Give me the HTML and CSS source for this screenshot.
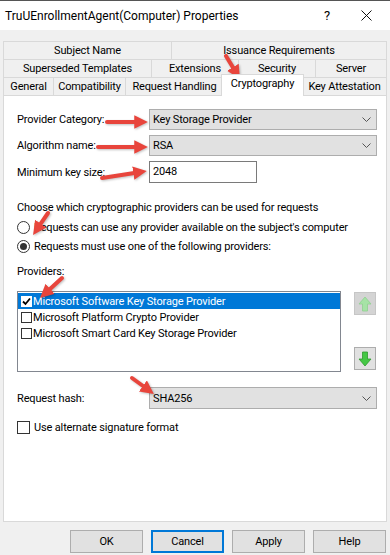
FILE: index.html
```html
<!DOCTYPE html>
<html lang="en">
<head>
    <meta charset="UTF-8">
    <meta name="viewport" content="width=device-width, initial-scale=1.0">
    <title>TruUEnrollmentAgent(Computer) Properties</title>
    <link rel="stylesheet" href="styles.css">
</head>
<body>
    <div class="dialog">
        <div class="titlebar">
            <span class="title">TruUEnrollmentAgent(Computer) Properties</span>
            <span class="title-help">?</span>
            <span class="title-close">
                <svg width="11" height="11" viewBox="0 0 11 11"><path d="M0.5 0.5 L10.5 10.5 M10.5 0.5 L0.5 10.5" stroke="#111" stroke-width="1"/></svg>
            </span>
        </div>

        <div class="sheet">
            <div class="tabs">
                <div class="tab-row row-top">
                    <div class="tab">Subject Name</div>
                    <div class="tab">Issuance Requirements</div>
                </div>
                <div class="tab-row row-mid">
                    <div class="tab">Superseded Templates</div>
                    <div class="tab">Extensions</div>
                    <div class="tab">Security</div>
                    <div class="tab">Server</div>
                </div>
                <div class="tab-row row-bottom">
                    <div class="tab">General</div>
                    <div class="tab">Compatibility</div>
                    <div class="tab">Request Handling</div>
                    <div class="tab active">Cryptography</div>
                    <div class="tab">Key Attestation</div>
                </div>
            </div>

            <div class="panel">
                <div class="fields">
                    <div class="field-row">
                        <span class="label">Provider Category:</span>
                        <div class="combo"><span>Key Storage Provider</span><svg width="9" height="5" viewBox="0 0 9 5"><path d="M0.5 0.5 L4.5 4.5 L8.5 0.5" fill="none" stroke="#555"/></svg></div>
                    </div>
                    <div class="field-row">
                        <span class="label">Algorithm name:</span>
                        <div class="combo"><span>RSA</span><svg width="9" height="5" viewBox="0 0 9 5"><path d="M0.5 0.5 L4.5 4.5 L8.5 0.5" fill="none" stroke="#555"/></svg></div>
                    </div>
                    <div class="field-row">
                        <span class="label">Minimum key size:</span>
                        <div class="textbox">2048</div>
                    </div>
                </div>

                <p class="group-text">Choose which cryptographic providers can be used for requests</p>
                <div class="option">
                    <span class="radio"></span>
                    <span>Requests can use any provider available on the subject's computer</span>
                </div>
                <div class="option">
                    <span class="radio checked"><span class="radio-dot"></span></span>
                    <span>Requests must use one of the following providers:</span>
                </div>

                <p class="group-text providers-label">Providers:</p>
                <div class="providers">
                    <div class="listbox">
                        <div class="list-item selected">
                            <span class="check on">
                                <svg width="9" height="9" viewBox="0 0 9 9"><path d="M1 4.5 L3.5 7 L8 1.5" fill="none" stroke="#000" stroke-width="1.8"/></svg>
                            </span>
                            <span>Microsoft Software Key Storage Provider</span>
                        </div>
                        <div class="list-item">
                            <span class="check"></span>
                            <span>Microsoft Platform Crypto Provider</span>
                        </div>
                        <div class="list-item">
                            <span class="check"></span>
                            <span>Microsoft Smart Card Key Storage Provider</span>
                        </div>
                    </div>
                    <div class="move-buttons">
                        <div class="move-btn disabled">
                            <svg width="14" height="16" viewBox="0 0 14 16"><path d="M7 1 L13 8 L9.5 8 L9.5 15 L4.5 15 L4.5 8 L1 8 Z" fill="#a6e3a6" stroke="#8fd08f" stroke-width="0.8"/></svg>
                        </div>
                        <div class="move-btn">
                            <svg width="14" height="16" viewBox="0 0 14 16"><path d="M4.5 1 L9.5 1 L9.5 8 L13 8 L7 15 L1 8 L4.5 8 Z" fill="#45c745" stroke="#2e9a2e" stroke-width="0.8"/></svg>
                        </div>
                    </div>
                </div>

                <div class="field-row hash-row">
                    <span class="label">Request hash:</span>
                    <div class="combo"><span>SHA256</span><svg width="9" height="5" viewBox="0 0 9 5"><path d="M0.5 0.5 L4.5 4.5 L8.5 0.5" fill="none" stroke="#555"/></svg></div>
                </div>

                <div class="option alt-format">
                    <span class="check plain"></span>
                    <span>Use alternate signature format</span>
                </div>
            </div>
        </div>

        <div class="buttons">
            <button class="btn">OK</button>
            <button class="btn focused">Cancel</button>
            <button class="btn">Apply</button>
            <button class="btn">Help</button>
        </div>

        <!-- red callout arrows drawn on top of the screenshot -->
        <svg class="marks" width="390" height="555" viewBox="0 0 390 555">
            <defs>
                <marker id="head" viewBox="0 0 10 10" refX="2" refY="5" markerWidth="3.4" markerHeight="3.4" orient="auto">
                    <path d="M0 0 L10 5 L0 10 Z" fill="#e8453c"/>
                </marker>
            </defs>
            <line x1="107" y1="121" x2="137" y2="121" marker-end="url(#head)"/>
            <line x1="98" y1="146" x2="137" y2="146" marker-end="url(#head)"/>
            <line x1="102" y1="177" x2="136" y2="171.7" marker-end="url(#head)"/>
            <line x1="226" y1="55" x2="234.3" y2="68.6" marker-end="url(#head)"/>
            <line x1="48" y1="212" x2="39.2" y2="224.9" marker-end="url(#head)"/>
            <line x1="62" y1="277" x2="48.1" y2="289.7" marker-end="url(#head)"/>
            <line x1="132" y1="377" x2="145.1" y2="386.5" marker-end="url(#head)"/>
        </svg>
    </div>
</body>
</html>
```

FILE: styles.css
```css
* {
    margin: 0;
    padding: 0;
    box-sizing: border-box;
}

body {
    font-family: Roboto, 'Liberation Sans', sans-serif;
    font-size: 11px;
    letter-spacing: -0.15px;
    color: #000;
    background: #f0f0f0;
}

.dialog {
    position: relative;
    width: 390px;
    height: 555px;
    background: #f0f0f0;
    border-top: 1px solid #555;
    overflow: hidden;
}

.titlebar {
    display: flex;
    align-items: center;
    height: 29px;
    background: #fff;
    padding-left: 5px;
}

.title {
    flex: 1;
    font-size: 12px;
    letter-spacing: 0;
}

.title-help {
    font-size: 13px;
    margin-right: 31px;
}

.title-close {
    display: flex;
    margin-right: 18px;
}

.sheet {
    padding: 11px 3px 0 3px;
}

.tab-row {
    display: grid;
    height: 18px;
}

.row-top { grid-template-columns: 168px 216px; }
.row-mid { grid-template-columns: 148px 87px 77px 72px; }
.row-bottom { grid-template-columns: 50px 72px 98px 79px 85px; }

.tab {
    border-top: 1px solid #d9d9d9;
    border-left: 1px solid #d9d9d9;
    background: #f0f0f0;
    text-align: center;
    line-height: 17px;
    white-space: nowrap;
}

.tab:last-child {
    border-right: 1px solid #d9d9d9;
}

.tab.active {
    position: relative;
    z-index: 1;
    margin: -3px -2px -1px;
    background: #fff;
    border-right: 1px solid #d9d9d9;
}

.panel {
    height: 427px;
    background: #fff;
    border: 1px solid #d9d9d9;
    padding: 13px 9px 0 13px;
}

.fields {
    display: flex;
    flex-direction: column;
    gap: 5px;
}

.field-row {
    display: grid;
    grid-template-columns: 132px 1fr;
    align-items: center;
}

.combo {
    display: flex;
    align-items: center;
    justify-content: space-between;
    height: 21px;
    background: #e1e1e1;
    border: 1px solid #adadad;
    padding: 0 5px 0 3px;
}

.textbox {
    width: 108px;
    height: 22px;
    line-height: 20px;
    background: #fff;
    border: 1px solid #7a7a7a;
    padding-left: 3px;
}

.group-text {
    margin-top: 17px;
    line-height: 16px;
}

.option {
    display: flex;
    align-items: center;
    gap: 4px;
    height: 19px;
}

.group-text + .option {
    margin-top: 2px;
}

.radio {
    display: flex;
    align-items: center;
    justify-content: center;
    width: 13px;
    height: 13px;
    border: 1px solid #333;
    border-radius: 50%;
    background: #fff;
}

.radio-dot {
    width: 7px;
    height: 7px;
    border-radius: 50%;
    background: #333;
}

.providers-label {
    margin-top: 8px;
}

.providers {
    display: flex;
    gap: 13px;
    margin-top: 11px;
}

.listbox {
    width: 324px;
    height: 81px;
    border: 1px solid #828790;
    padding: 1px 0;
}

.list-item {
    display: flex;
    align-items: center;
    gap: 1px;
    height: 16px;
    padding-left: 3px;
    white-space: nowrap;
}

.list-item.selected {
    background: #0078d7;
    color: #fff;
}

.check {
    display: flex;
    align-items: center;
    justify-content: center;
    width: 11px;
    height: 11px;
    border: 1px solid #333;
    background: #fff;
}

.check.on {
    border-color: #fff;
}

.check.plain {
    width: 13px;
    height: 13px;
}

.move-buttons {
    display: flex;
    flex-direction: column;
    justify-content: space-between;
    padding: 1px 0 2px;
}

.move-btn {
    display: flex;
    align-items: center;
    justify-content: center;
    width: 22px;
    height: 23px;
    background: #e1e1e1;
    border: 1px solid #adadad;
}

.move-btn.disabled {
    background: #d4d4d4;
    border-color: #c6c6c6;
}

.hash-row {
    margin-top: 15px;
}

.hash-row .combo {
    height: 22px;
}

.alt-format {
    margin-top: 9px;
}

.buttons {
    display: flex;
    justify-content: flex-end;
    gap: 8px;
    padding: 8px 4px 0 0;
}

.btn {
    width: 73px;
    height: 23px;
    font-family: inherit;
    font-size: 11px;
    letter-spacing: -0.15px;
    color: #000;
    background: #e1e1e1;
    border: 1px solid #adadad;
}

.btn.focused {
    border: 2px solid #0078d7;
}

.marks {
    position: absolute;
    top: 0;
    left: 0;
    pointer-events: none;
    filter: drop-shadow(1px 1px 1px rgba(0, 0, 0, 0.25));
}

.marks line {
    stroke: #e8453c;
    stroke-width: 4;
    stroke-linecap: round;
}
```
